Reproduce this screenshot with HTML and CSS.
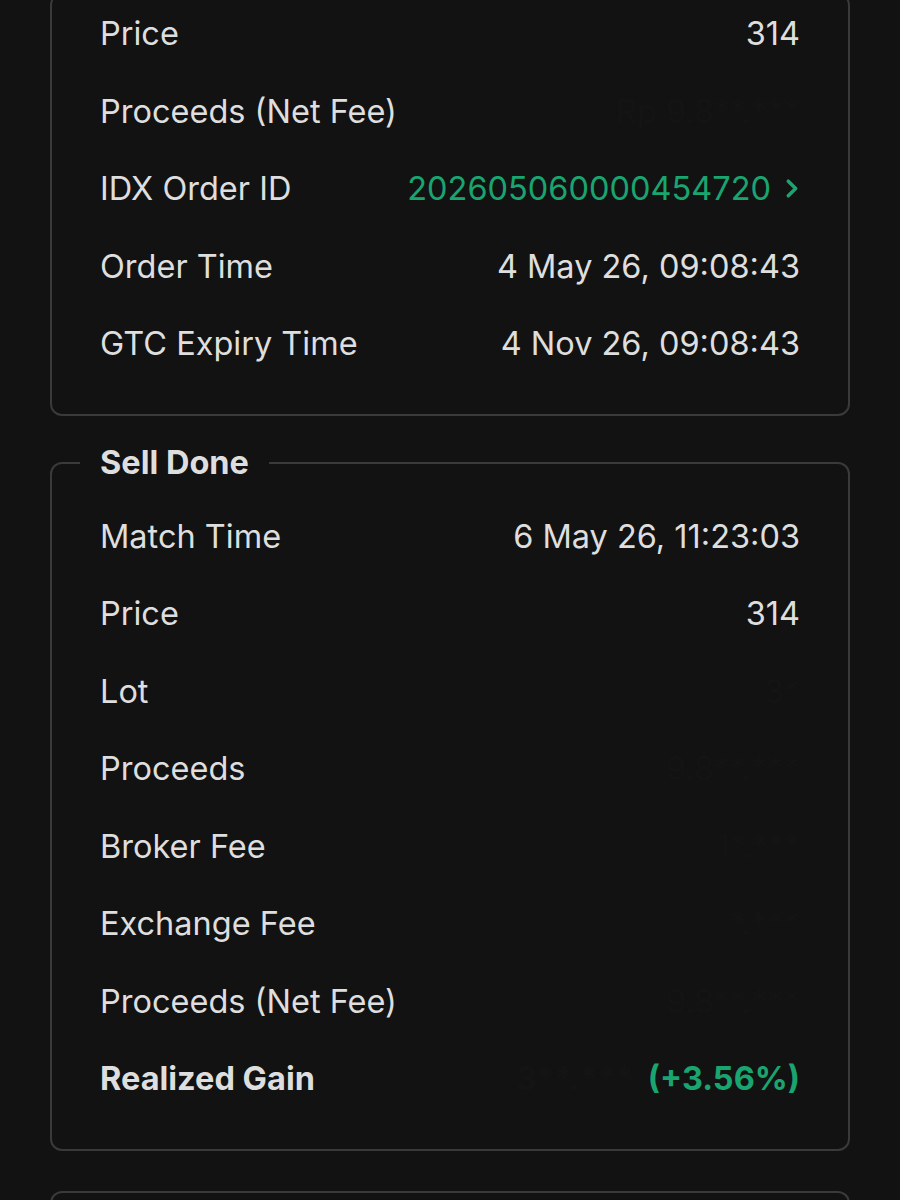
FILE: index.html
```html
<!DOCTYPE html>
<html lang="en">
<head>
    <meta charset="UTF-8">
    <meta name="viewport" content="width=device-width, initial-scale=1.0">
    <title>Order Detail</title>
    <link rel="stylesheet" href="styles.css">
</head>
<body>

<div class="page">

    <!-- 下單資料 (上方被捲走一部分) -->
    <div class="card card-top">
        <div class="row"><span class="label">Price</span><span class="value">314</span></div>
        <div class="row"><span class="label">Proceeds (Net Fee)</span><span class="value hidden">Rp 9.8**.***</span></div>
        <div class="row">
            <span class="label">IDX Order ID</span>
            <span class="value link">202605060000454720
                <svg class="chev" viewBox="0 0 14 20" width="15" height="21"><path d="M3 3l7 7-7 7" fill="none" stroke="currentColor" stroke-width="3.4" stroke-linecap="round" stroke-linejoin="round"/></svg>
            </span>
        </div>
        <div class="row"><span class="label">Order Time</span><span class="value">4 May 26, 09:08:43</span></div>
        <div class="row"><span class="label">GTC Expiry Time</span><span class="value">4 Nov 26, 09:08:43</span></div>
    </div>

    <!-- 成交 -->
    <fieldset class="card">
        <legend>Sell Done</legend>
        <div class="row"><span class="label">Match Time</span><span class="value">6 May 26, 11:23:03</span></div>
        <div class="row"><span class="label">Price</span><span class="value">314</span></div>
        <div class="row"><span class="label">Lot</span><span class="value hidden">3*</span></div>
        <div class="row"><span class="label">Proceeds</span><span class="value hidden">9.8**.***</span></div>
        <div class="row"><span class="label">Broker Fee</span><span class="value hidden">1*.***</span></div>
        <div class="row"><span class="label">Exchange Fee</span><span class="value hidden">*.***</span></div>
        <div class="row"><span class="label">Proceeds (Net Fee)</span><span class="value hidden">9.8**.***</span></div>
        <div class="row total">
            <span class="label">Realized Gain</span>
            <span class="value"><span class="hidden">3**.***</span> <span class="gain">(+3.56%)</span></span>
        </div>
    </fieldset>

    <div class="card card-next"></div>

</div>

</body>
</html>
```

FILE: styles.css
```css
        html,
        body{
            margin:0;
            background:#121212;
            color:#dedede;
            font-family:'Inter', 'Noto Sans', sans-serif;
            font-size:32.5px;
            overflow:hidden;
        }

        .page{
            padding:0 50px;
            margin-top:-7px;
        }

        .card{
            border:2px solid #3a3a3a;
            border-radius:12px;
            padding:0 48px 31px;
            margin:0;
        }
        .card-top{
            padding-top:0;
            margin-bottom:30px;
        }

/* 標題 */
        legend{
            font-weight:700;
            font-size:32.5px;
            line-height:34px;
            padding:0 20px;
            margin-left:-20px;
        }
        fieldset.card{
            padding-top:18px;
        }

/* 每一列 */
        .row{
            display:flex;
            justify-content:space-between;
            align-items:center;
            height:77.5px;
        }
        .value{
            display:flex;
            align-items:center;
            gap:14px;
        }
        .link{
            color:#19a470;
        }
        .chev{
            margin-left:0;
        }
        .hidden{
            color:#141414;
        }
        .total{
            font-weight:700;
        }
        .gain{
            color:#19a470;
        }

        .card-next{
            margin-top:40px;
            height:40px;
            border-bottom:none;
            border-radius:12px 12px 0 0;
        }
```
